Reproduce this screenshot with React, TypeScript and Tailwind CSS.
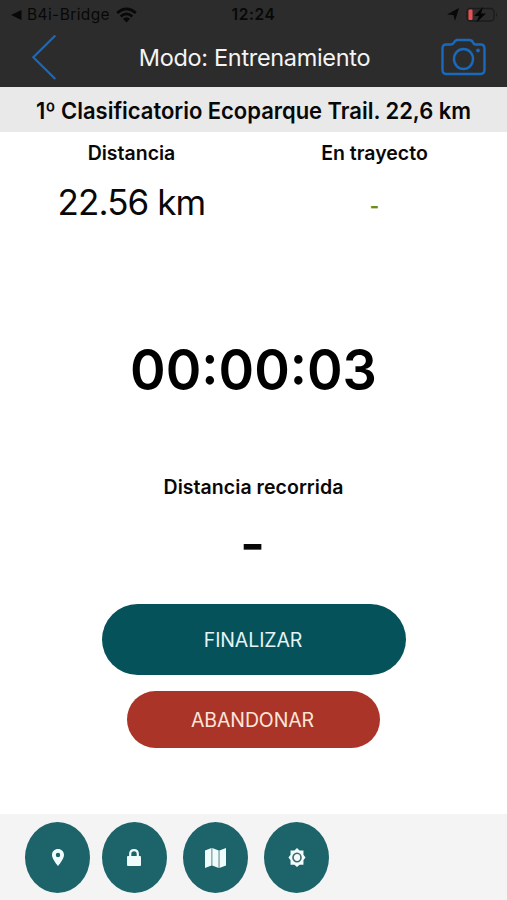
import type { ReactNode } from "react";

function RoundButton({ label, children, className }: { label: string; children: ReactNode; className: string }) {
  return (
    <button aria-label={label} className={`flex h-[71px] w-[65px] shrink-0 items-center justify-center rounded-[50%] bg-[#1c636a] text-[#f0fbfc] ${className}`}>
      {children}
    </button>
  );
}

export default function App() {
  return (
    <div className="flex h-[900px] w-[507px] flex-col overflow-hidden bg-white font-['Inter','Liberation_Sans',sans-serif] whitespace-nowrap text-[#080808]">
      <header className="h-[87px] bg-[#2c2c2c]">
        <div className="grid h-[29px] grid-cols-3 items-center text-[#080808]">
          <div className="flex items-center pl-[11px]">
            <svg width="11" height="10" viewBox="0 0 11 10" fill="currentColor"><path d="M0 5 10.500 0V10Z" /></svg>
            <span className="ml-[5px] text-[15.500px] tracking-[0.400px] leading-5">B4i-Bridge</span>
            <svg className="ml-[6px]" width="21" height="16" viewBox="0 0 21 16" fill="none" stroke="currentColor" strokeWidth="2.700">
              <path d="M1.200 6Q10.500-2.200 19.800 6M4.700 9.500Q10.500 4.300 16.300 9.500" />
              <path d="M10.500 15.500 6.900 11.800Q10.500 8.700 14.100 11.800Z" fill="currentColor" stroke="none" />
            </svg>
          </div>
          <span className="text-center text-[15.500px] font-semibold leading-5 tracking-[0.600px]">12:24</span>
          <div className="flex items-center justify-end pr-[9px]">
            <svg width="12" height="13" viewBox="0 0 12 13" fill="currentColor"><path d="M0 6.500 12 0 8 13 6.500 7Z" /></svg>
            <svg className="ml-[7px]" width="32" height="16" viewBox="0 0 32 16">
              <rect x="1" y="1.500" width="27" height="12.500" rx="3.500" fill="none" stroke="#1b1b1b" strokeWidth="1.300" />
              <path d="M30 5.500Q32 7.800 30 10Z" fill="#1b1b1b" />
              <rect x="2.500" y="2.500" width="4" height="10.500" rx="1" fill="#e9504f" />
              <path d="M17 0 8 9H13L10.500 15.500 20 6.500H15Z" fill="#050505" />
            </svg>
          </div>
        </div>
        <div className="flex h-[58px] items-center pl-8 pr-[21px]">
          <svg width="25" height="46" viewBox="0 0 25 46" fill="none" stroke="#1969bd" strokeWidth="2.200" className="shrink-0"><path d="M23.300 .5 1.300 22.300 23.300 44" /></svg>
          <h1 className="flex-1 pb-px pl-[11px] text-center text-[23.500px] tracking-[-0.320px] text-[#f4f4f4]">Modo: Entrenamiento</h1>
          <svg width="45" height="38" viewBox="0 0 45 38" fill="none" stroke="#1969bd" strokeWidth="2.400" className="mb-[2px] shrink-0">
            <path d="M5 6.500H10Q12 6.500 13 4.500T16 2H28Q31 2 32 4.500T35 6.500H39.500Q43.500 6.500 43.500 10.500V31.500Q43.500 36 39.500 36H5Q1.500 36 1.500 31.500V10.500Q1.500 6.500 5 6.500Z" />
            <ellipse cx="22.500" cy="21" rx="9.500" ry="10" />
            <circle cx="37" cy="12.500" r="1.900" fill="#1969bd" stroke="none" />
          </svg>
        </div>
      </header>
      <div className="flex h-[45px] items-center justify-center bg-[#e9e9e9] pt-[3px] text-[22px] font-semibold tracking-[-0.030px]">
        <span className="scale-y-[1.030]">1º Clasificatorio Ecoparque Trail. 22,6 km</span>
      </div>
      <main className="flex h-[682px] flex-col items-center">
        <div className="grid h-[100px] w-full grid-cols-[263px_223px] text-center">
          <div>
            <h2 className="mt-[7px] text-[19.500px] font-semibold leading-7">Distancia</h2>
            <p className="mt-[13px] text-[35px] leading-[44px] tracking-[-0.900px]">22.56 km</p>
          </div>
          <div>
            <h2 className="mt-[7px] text-[19.500px] font-semibold leading-7">En trayecto</h2>
            <p className="mt-[25px] text-[20px] font-bold leading-7 text-[#6d8a1c]">-</p>
          </div>
        </div>
        <div className="mt-[105px] flex h-[64px] scale-y-[1.040] items-center text-[54px] font-semibold text-black"><span>00:00:03</span></div>
        <h2 className="mt-[72px] text-[19.500px] font-semibold leading-7 tracking-[0.050px]">Distancia recorrida</h2>
        <p className="mt-[13px] pr-[2px] text-[54px] font-semibold leading-[60px]">-</p>
        <button className="mt-[30px] flex h-[71px] w-[304px] shrink-0 items-center justify-center rounded-[36px] bg-[#06525a] pr-px pt-[2px] text-[19.500px] tracking-[-0.100px] text-[#e3f4f5]">FINALIZAR</button>
        <button className="mr-px mt-[16px] flex h-[57px] w-[253px] shrink-0 items-center justify-center rounded-[29px] bg-[#aa3427] pr-px pt-[2px] text-[19.500px] tracking-[-0.120px] text-[#fce5da]">ABANDONAR</button>
      </main>
      <footer className="flex h-[86px] items-start bg-[#f4f4f4] pl-[25px] pt-2">
        <RoundButton label="Ubicación" className="mr-3">
          <svg width="12" height="17" viewBox="0 0 12 17" fill="currentColor" fillRule="evenodd" className="mb-px"><path d="M6 0C2.600 0 0 2.500 0 6c0 4.200 6 11 6 11s6-6.800 6-11c0-3.500-2.600-6-6-6Zm0 3.700a2.200 2.300 0 1 1 0 4.600 2.200 2.300 0 0 1 0-4.600Z" /></svg>
        </RoundButton>
        <RoundButton label="Bloquear" className="mr-4">
          <svg width="14" height="17" viewBox="0 0 14 17" className="mb-px mr-px"><path d="M3.200 8V5Q3.200 1.200 7 1.200T10.800 5V8" fill="none" stroke="currentColor" strokeWidth="2.200" /><rect y="7" width="14" height="10" rx="1" fill="currentColor" /></svg>
        </RoundButton>
        <RoundButton label="Mapa" className="mr-4">
          <svg width="21" height="20" viewBox="0 0 21 20" fill="currentColor"><path d="M0 2.500 6.500 0V17.500L0 20ZM7.200 0 13.700 2.500V20L7.200 17.500ZM14.400 2.500 21 0V17.500L14.400 20Z" /><path d="M6.850 0V17.500M14.050 2.500V20" stroke="#9cb5b8" strokeWidth=".9" /></svg>
        </RoundButton>
        <RoundButton label="Ajustes" className="">
          <svg width="18" height="19" viewBox="0 0 18 20"><path d="M9 0 11.700 2.500H15.800V7L18 10 15.800 13V17.500H11.700L9 20 6.300 17.500H2.200V13L0 10 2.200 7V2.500H6.300Z" fill="currentColor" /><ellipse cx="9" cy="10" rx="4.200" ry="4.500" fill="none" stroke="#47656b" strokeWidth="1.700" /></svg>
        </RoundButton>
      </footer>
    </div>
  );
}
